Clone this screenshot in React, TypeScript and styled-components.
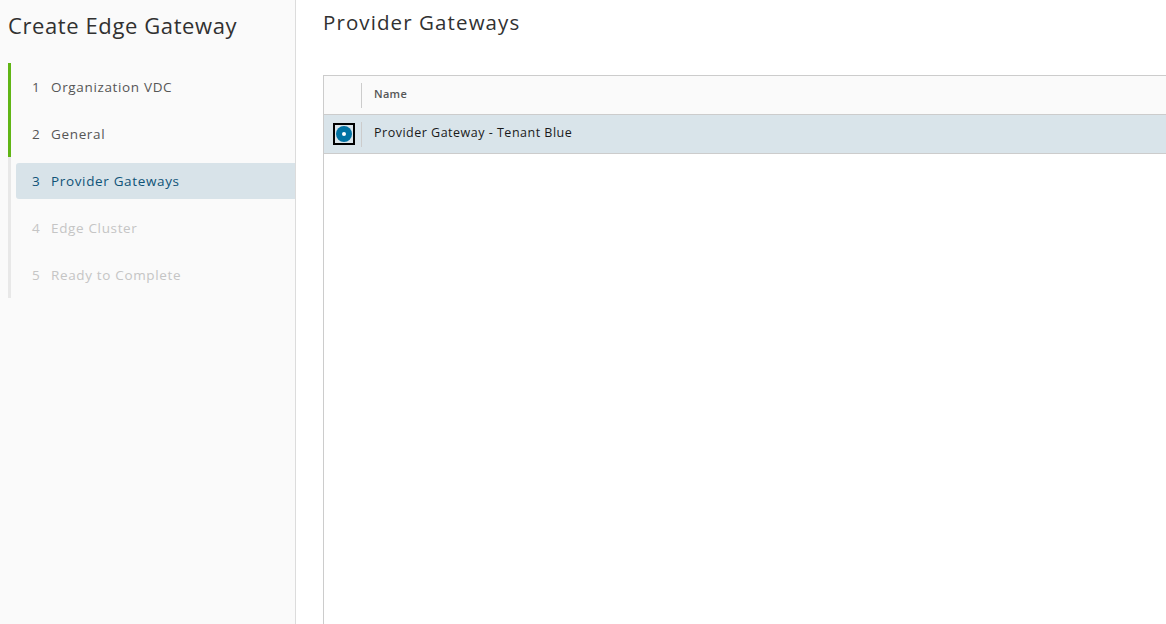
import styled, { createGlobalStyle } from 'styled-components'

const GlobalStyle = createGlobalStyle`
    html, body {
        margin: 0;
        padding: 0;
        height: 100%;
        overflow: hidden;
        background: #ffffff;
    }
    #root {
        height: 100%;
    }
`

type StepState = 'done' | 'current' | 'todo'

type Step = {
    label: string
    state: StepState
}

const steps: Step[] = [
    { label: 'Organization VDC', state: 'done' },
    { label: 'General', state: 'done' },
    { label: 'Provider Gateways', state: 'current' },
    { label: 'Edge Cluster', state: 'todo' },
    { label: 'Ready to Complete', state: 'todo' },
]

const Page = styled.div`
    display: flex;
    height: 624px;
    width: 1166px;
    font-family: 'Open Sans', Lato, sans-serif;
    color: #313131;
`

const Sidebar = styled.nav`
    width: 295px;
    flex-shrink: 0;
    background: #fafafa;
    border-right: 1px solid #dcdcdc;
`

const WizardTitle = styled.h2`
    margin: 0;
    padding: 10px 0 0 8px;
    height: 51px;
    box-sizing: border-box;
    font-size: 22px;
    font-weight: 400;
    letter-spacing: 0.6px;
    color: #313131;
`

const StepList = styled.ol`
    list-style: none;
    margin: 12px 0 0 8px;
    padding: 0;
`

const StepItem = styled.li<{ state: StepState }>`
    display: flex;
    align-items: stretch;
    height: 47px;
    border-left: 3px solid ${p => (p.state === 'done' ? '#60b515' : '#e8e8e8')};
`

const StepLink = styled.div<{ state: StepState }>`
    flex: 1;
    display: flex;
    align-items: center;
    gap: 10px;
    margin-left: 5px;
    padding-left: 16px;
    height: 36px;
    align-self: center;
    border-radius: 3px 0 0 3px;
    font-size: 13.5px;
    letter-spacing: 0.65px;
    background: ${p => (p.state === 'current' ? '#d8e3e9' : 'transparent')};
    color: ${p =>
        p.state === 'current' ? '#0f5378' : p.state === 'todo' ? '#c5c5c5' : '#565656'};
`

const StepNumber = styled.span`
    width: 9px;
`

const Main = styled.main`
    flex: 1;
    padding: 0 0 0 27px;
    min-width: 0;
`

const PageTitle = styled.h3`
    margin: 0;
    padding-top: 8px;
    height: 75px;
    box-sizing: border-box;
    font-size: 20.5px;
    font-weight: 400;
    letter-spacing: 1.1px;
    color: #313131;
`

const Grid = styled.div`
    border: 1px solid #cccccc;
    border-right: none;
    height: 560px;
    background: #ffffff;
`

const HeaderRow = styled.div`
    display: flex;
    height: 38px;
    background: #fafafa;
    border-bottom: 1px solid #cccccc;
`

const Cell = styled.div<{ narrow?: boolean; divider?: boolean }>`
    display: flex;
    align-items: center;
    box-sizing: border-box;
    flex: ${p => (p.narrow ? '0 0 38px' : '1')};
    padding-left: ${p => (p.narrow ? '9px' : '12px')};
    padding-bottom: ${p => (p.narrow ? '0' : '3px')};
    position: relative;
    ${p =>
        p.divider &&
        `&::after {
            content: '';
            position: absolute;
            right: 0;
            top: 7px;
            bottom: 6px;
            width: 1px;
            background: #cccccc;
        }`}
`

const HeaderLabel = styled.span`
    font-size: 11px;
    font-weight: 600;
    letter-spacing: 0.3px;
    color: #565656;
`

const DataRow = styled.div<{ selected?: boolean }>`
    display: flex;
    height: 38px;
    background: ${p => (p.selected ? '#d9e4ea' : '#ffffff')};
    border-bottom: 1px solid #cccccc;
`

const RadioFocus = styled.span`
    display: flex;
    align-items: center;
    justify-content: center;
    width: 22px;
    height: 22px;
    box-sizing: border-box;
    border: 2px solid #000000;
`

const RadioDot = styled.span`
    width: 16px;
    height: 16px;
    border-radius: 50%;
    background: #0072a3;
    display: flex;
    align-items: center;
    justify-content: center;
    &::after {
        content: '';
        width: 4px;
        height: 4px;
        border-radius: 50%;
        background: #ffffff;
    }
`

const RowText = styled.span`
    font-size: 12.5px;
    letter-spacing: 0.5px;
    color: #1a1a1a;
`

export default function App() {
    return (
        <>
            <GlobalStyle />
            <Page>
                <Sidebar>
                    <WizardTitle>Create Edge Gateway</WizardTitle>
                    <StepList>
                        {steps.map((s, i) => (
                            <StepItem key={s.label} state={s.state}>
                                <StepLink state={s.state}>
                                    <StepNumber>{i + 1}</StepNumber>
                                    <span>{s.label}</span>
                                </StepLink>
                            </StepItem>
                        ))}
                    </StepList>
                </Sidebar>
                <Main>
                    <PageTitle>Provider Gateways</PageTitle>
                    <Grid>
                        <HeaderRow>
                            <Cell narrow divider />
                            <Cell>
                                <HeaderLabel>Name</HeaderLabel>
                            </Cell>
                        </HeaderRow>
                        <DataRow selected>
                            <Cell narrow divider>
                                <RadioFocus>
                                    <RadioDot />
                                </RadioFocus>
                            </Cell>
                            <Cell>
                                <RowText>Provider Gateway - Tenant Blue</RowText>
                            </Cell>
                        </DataRow>
                    </Grid>
                </Main>
            </Page>
        </>
    )
}
